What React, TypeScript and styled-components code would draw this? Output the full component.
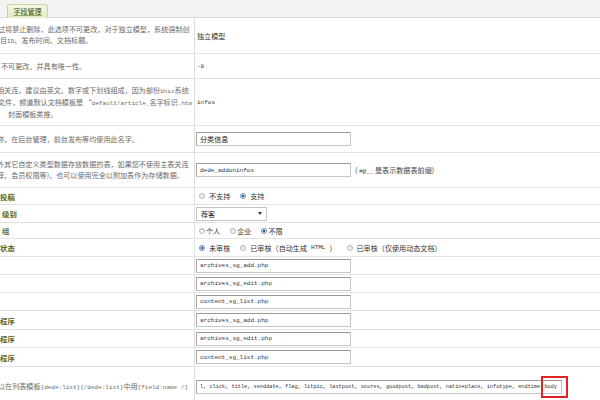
import styled, { createGlobalStyle } from 'styled-components';

const GlobalStyle = createGlobalStyle`
  body {
    margin: 0;
    background: #fff;
    font-family: "Noto Sans CJK SC", "Liberation Sans", sans-serif;
    overflow: hidden;
  }
`;

const CJK = '"Noto Sans CJK SC", "Liberation Sans", sans-serif';
const MONO = '"Liberation Mono", "Noto Sans CJK SC", monospace';

interface RowProps {
  $h: number;
}

function App() {
  return (
    <Page>
      <GlobalStyle />
      <TabBar>
        <Tab>
          <span>字段管理</span>
        </Tab>
      </TabBar>

      <Row $h={36}>
        <Hint>
          <Line $shift={-2}>过将禁止删除，此选项不可更改，对于独立模型，系统强制创</Line>
          <Line>目<Latin>ID</Latin>、发布时间、文档标题。</Line>
        </Hint>
        <Value>
          <Plain>独立模型</Plain>
        </Value>
      </Row>

      <Row $h={25}>
        <Hint>
          <Line $shift={1}>不可更改，并具有唯一性。</Line>
        </Hint>
        <Value>
          <Code>-8</Code>
        </Value>
      </Row>

      <Row $h={47}>
        <Hint>
          <Line $shift={-3}>相关连，建议由英文、数字或下划线组成，因为部份<Latin>Unix</Latin>系统</Line>
          <Line $shift={-2}>文件，频道默认文档模板是 “<Latin>default/article_</Latin>名字标识<Latin>.htm</Latin></Line>
          <Line $shift={8}>封面模板类推。</Line>
        </Hint>
        <Value>
          <Code>infos</Code>
        </Value>
      </Row>

      <Row $h={27}>
        <Hint>
          <Line $shift={-3}>称，在后台管理，前台发布等均使用此名字。</Line>
        </Hint>
        <Value>
          <TextBox $w={155}>
            <CjkText>分类信息</CjkText>
          </TextBox>
        </Value>
      </Row>

      <Row $h={35}>
        <Hint>
          <Line $shift={-3}>外其它自定义类型数据存放数据的表，如果您不使用主表关连</Line>
          <Line $shift={-3}>荐、会员权限等)，也可以使用完全以附加表作为存储数据。</Line>
        </Hint>
        <Value>
          <TextBox $w={155}>dede_addoninfos</TextBox>
          <Note>
            ( <Latin>#@__</Latin> 是表示数据表前缀)
          </Note>
        </Value>
      </Row>

      <Row $h={17}>
        <Hint>
          <Label>投稿</Label>
        </Hint>
        <Value>
          <Choice>
            <Radio />
            不支持
          </Choice>
          <Choice>
            <Radio $on />
            支持
          </Choice>
        </Value>
      </Row>

      <Row $h={18}>
        <Hint>
          <Label $shift={2}>级别</Label>
        </Hint>
        <Value>
          <Select>
            <span>荐客</span>
            <Caret />
          </Select>
        </Value>
      </Row>

      <Row $h={16}>
        <Hint>
          <Label $shift={2}>组</Label>
        </Hint>
        <Value>
          <Choice $tight>
            <Radio />
            个人
          </Choice>
          <Choice $tight>
            <Radio />
            企业
          </Choice>
          <Choice $tight>
            <Radio $on />
            不限
          </Choice>
        </Value>
      </Row>

      <Row $h={18}>
        <Hint>
          <Label>状态</Label>
        </Hint>
        <Value>
          <Choice>
            <Radio $on />
            未审核
          </Choice>
          <Choice>
            <Radio />
            已审核（自动生成<Latin>HTML</Latin>）
          </Choice>
          <Choice>
            <Radio />
            已审核（仅使用动态文档）
          </Choice>
        </Value>
      </Row>

      <Row $h={18}>
        <Hint />
        <Value>
          <TextBox $w={155}>archives_sg_add.php</TextBox>
        </Value>
      </Row>
      <Row $h={18}>
        <Hint />
        <Value>
          <TextBox $w={155}>archives_sg_edit.php</TextBox>
        </Value>
      </Row>
      <Row $h={18}>
        <Hint />
        <Value>
          <TextBox $w={155}>content_sg_list.php</TextBox>
        </Value>
      </Row>

      <Row $h={19}>
        <Hint>
          <Label>程序</Label>
        </Hint>
        <Value>
          <TextBox $w={155}>archives_sg_add.php</TextBox>
        </Value>
      </Row>
      <Row $h={18}>
        <Hint>
          <Label>程序</Label>
        </Hint>
        <Value>
          <TextBox $w={155}>archives_sg_edit.php</TextBox>
        </Value>
      </Row>
      <Row $h={19}>
        <Hint>
          <Label>程序</Label>
        </Hint>
        <Value>
          <TextBox $w={155}>content_sg_list.php</TextBox>
        </Value>
      </Row>

      <Row $h={40}>
        <Hint>
          <Line $shift={-2}>
            以在列表模板<Latin>{'{dede:list}{/dede:list}'}</Latin>中用<Latin>[field:name /]</Latin>
          </Line>
        </Hint>
        <Value>
          <TextBox $w={366}>
            <Squeezed>
              l, click, title, senddate, flag, litpic, lastpost, scores, goodpost, badpost, nativeplace, infotype, endtime,
              <Marked>body</Marked>
            </Squeezed>
          </TextBox>
        </Value>
      </Row>
    </Page>
  );
}

export default App;

const Page = styled.div`
  width: 600px;
  height: 400px;
  overflow: hidden;
  display: flex;
  flex-direction: column;
`;

const TabBar = styled.div`
  height: 18px;
  box-sizing: border-box;
  flex-shrink: 0;
  background: #f3f3f3;
  border-bottom: 1px solid #dcdcdc;
  display: flex;
  align-items: flex-end;
  padding-left: 7px;
`;

const Tab = styled.div`
  width: 41px;
  height: 14px;
  margin-bottom: -1px;
  box-sizing: border-box;
  background: linear-gradient(#f1f8e2, #e1eec4);
  border: 1px solid #c4d6a1;
  border-bottom-color: #e1eec4;
  border-radius: 3px 3px 0 0;
  display: flex;
  align-items: center;
  justify-content: center;

  span {
    font-family: ${CJK};
    font-size: 7px;
    line-height: 8px;
    color: #3a4a1a;
    text-decoration: underline;
    text-decoration-color: #8fa86a;
  }
`;

const Row = styled.div<RowProps>`
  display: grid;
  grid-template-columns: 195px 1fr;
  height: ${({ $h }) => $h}px;
  box-sizing: border-box;
  flex-shrink: 0;
  border-bottom: 1px solid #e3e3e3;
`;

const Hint = styled.div`
  border-right: 1px solid #dedede;
  overflow: hidden;
  display: flex;
  flex-direction: column;
  justify-content: center;
  font-family: ${CJK};
  font-size: 7.1px;
  line-height: 11px;
  color: #6a6a6a;
  white-space: nowrap;
`;

const Line = styled.div<{ $shift?: number }>`
  margin-left: ${({ $shift = 0 }) => $shift}px;
`;

const Label = styled.div<{ $shift?: number }>`
  margin-left: ${({ $shift = 0 }) => $shift}px;
  font-weight: 700;
  font-size: 7.4px;
  color: #66660f;
`;

const Latin = styled.span`
  font-family: ${MONO};
  font-size: 6px;
`;

const Value = styled.div`
  display: flex;
  align-items: center;
  padding-left: 1px;
  font-family: ${CJK};
  font-size: 7.1px;
  color: #333;
  white-space: nowrap;
  min-width: 0;
`;

const Plain = styled.span`
  padding-left: 1px;
`;

const Code = styled.span`
  font-family: ${MONO};
  font-size: 6px;
  color: #333;
  padding-left: 1px;
`;

const TextBox = styled.div<{ $w: number }>`
  width: ${({ $w }) => $w}px;
  height: 14px;
  box-sizing: border-box;
  border: 1px solid #c6c6c6;
  border-top-color: #9a9a9a;
  border-left-color: #a8a8a8;
  background: #fff;
  display: flex;
  align-items: center;
  padding-left: 3px;
  font-family: ${MONO};
  font-size: 6px;
  color: #333;
  overflow: visible;
`;

const CjkText = styled.span`
  font-family: ${CJK};
  font-size: 7.1px;
  color: #222;
`;

const Note = styled.span`
  margin-left: 4px;
  color: #444;
`;

const Choice = styled.label<{ $tight?: boolean }>`
  display: flex;
  align-items: center;
  gap: ${({ $tight }) => ($tight ? 1 : 4)}px;
  margin-left: 3px;
  margin-right: 7px;
  color: #333;
`;

const Radio = styled.span<{ $on?: boolean }>`
  width: 6px;
  height: 6px;
  box-sizing: border-box;
  border-radius: 50%;
  border: 1px solid ${({ $on }) => ($on ? '#6f8fb0' : '#b4b4b4')};
  background: ${({ $on }) =>
    $on ? 'radial-gradient(circle, #1d5fa8 0 1.4px, #dfe9f3 1.6px)' : 'linear-gradient(#e6e6e6, #fafafa)'};
`;

const Select = styled.div`
  width: 71px;
  height: 14px;
  box-sizing: border-box;
  border: 1px solid #c3c3c3;
  display: flex;
  align-items: center;
  justify-content: space-between;
  padding: 0 4px;
  color: #222;
`;

const Caret = styled.span`
  width: 0;
  height: 0;
  border-left: 2.5px solid transparent;
  border-right: 2.5px solid transparent;
  border-top: 3px solid #333;
`;

const Squeezed = styled.span`
  font-size: 5.25px;
  white-space: nowrap;
`;

const Marked = styled.span`
  position: relative;
  margin-left: 1px;

  &::after {
    content: '';
    position: absolute;
    left: -3px;
    right: -11px;
    top: -8px;
    bottom: -8px;
    border: 2px solid #e02424;
  }
`;
